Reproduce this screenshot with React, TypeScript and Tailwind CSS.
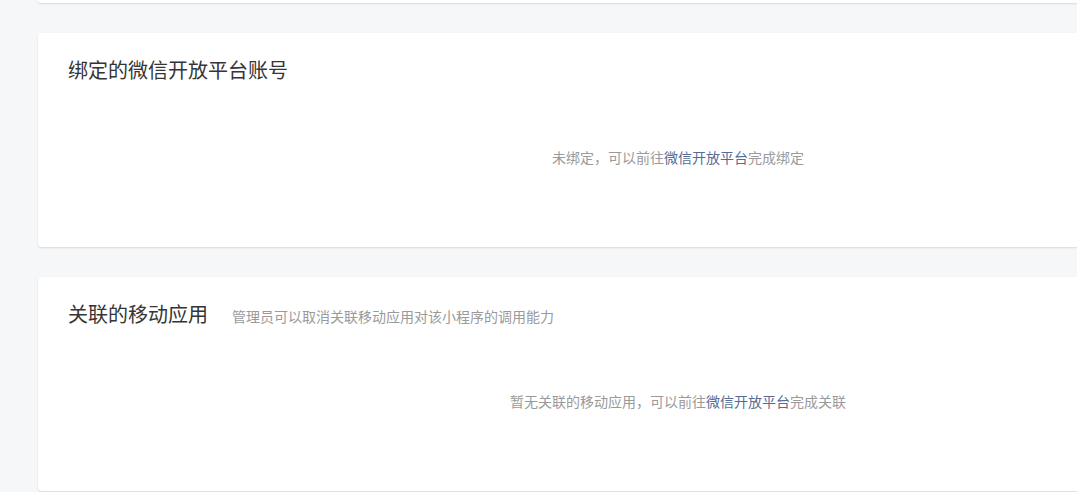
const font = "font-['Microsoft_YaHei','Noto_Sans_CJK_SC',sans-serif]";

function Card({
  title,
  desc,
  children,
}: {
  title: string;
  desc?: string;
  children: React.ReactNode;
}) {
  return (
    <section className="w-[1280px] shrink-0 rounded-[4px] bg-white px-[30px] pt-[23px] pb-[17px] shadow-[0_1px_2px_rgba(0,0,0,0.12)]">
      <div className="flex h-[28px] items-baseline">
        <h2 className="text-[20px] leading-[28px] font-normal text-[#353535]">{title}</h2>
        {desc && <p className="ml-[24px] text-[14px] leading-[28px] text-[#9a9a9a]">{desc}</p>}
      </div>
      <div className="flex h-[146px] items-center justify-center text-[14px] leading-[20px] text-[#9a9a9a]">
        {children}
      </div>
    </section>
  );
}

export default function App() {
  return (
    <div className={`h-screen w-full overflow-hidden bg-[#f6f7f9] ${font}`}>
      <div className="flex flex-col gap-[30px] pl-[38px]">
        {/* tail of the card above */}
        <div className="h-[3px] w-[1280px] rounded-b-[4px] bg-white shadow-[0_1px_2px_rgba(0,0,0,0.12)]" />

        <Card title="绑定的微信开放平台账号">
          <span>
            未绑定，可以前往<a className="text-[#576b95]">微信开放平台</a>完成绑定
          </span>
        </Card>

        <Card title="关联的移动应用" desc="管理员可以取消关联移动应用对该小程序的调用能力">
          <span>
            暂无关联的移动应用，可以前往<a className="text-[#576b95]">微信开放平台</a>完成关联
          </span>
        </Card>
      </div>
    </div>
  );
}
